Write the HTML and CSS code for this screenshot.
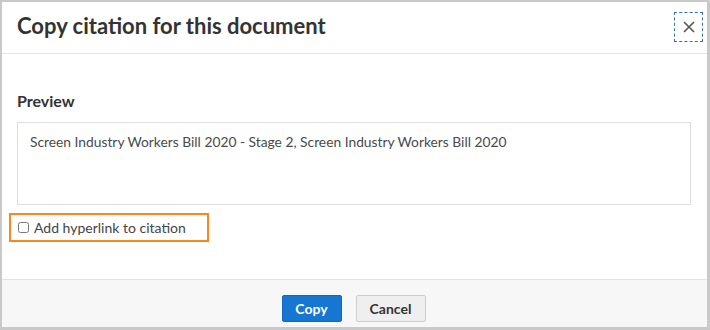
FILE: index.html
```html
<!DOCTYPE html>
<html lang="en">
<head>
  <meta charset="UTF-8">
  <meta name="viewport" content="width=device-width, initial-scale=1.0">
  <title>Copy citation</title>
  <link rel="stylesheet" href="styles.css">
</head>
<body>
  <div class="dialog">
    <div class="dialog-header">
      <h2>Copy citation for this document</h2>
      <button class="close-btn" aria-label="Close">
        <svg width="12" height="12" viewBox="0 0 12 12"><path d="M1 1L11 11M11 1L1 11" stroke="#555" stroke-width="1.6"/></svg>
      </button>
    </div>

    <div class="dialog-body">
      <h3>Preview</h3>
      <div class="preview">Screen Industry Workers Bill 2020 - Stage 2, Screen Industry Workers Bill 2020</div>
      <label class="hyperlink-option">
        <input type="checkbox">
        <span>Add hyperlink to citation</span>
      </label>
    </div>

    <div class="dialog-footer">
      <button class="btn btn-primary">Copy</button>
      <button class="btn">Cancel</button>
    </div>
  </div>
</body>
</html>
```

FILE: styles.css
```css
/* Reset styles */
* {
  margin: 0;
  padding: 0;
  box-sizing: border-box;
}

body {
  font-family: 'Lato', sans-serif;
  background-color: #c9c9c9;
  color: #333;
  width: 710px;
  height: 330px;
  padding: 2px 3px 3px 2px;
}

.dialog {
  background-color: #fff;
  height: 325px;
  display: flex;
  flex-direction: column;
}

.dialog-header {
  height: 52px;
  border-bottom: 1px solid #e3e3e3;
  display: flex;
  align-items: center;
  justify-content: space-between;
  padding: 0 4px 0 15px;
}

.dialog-header h2 {
  font-size: 22px;
  font-weight: 700;
  color: #333;
  margin-top: -4px;
}

.close-btn {
  width: 29px;
  height: 30px;
  border: 1px dashed #3b6ea5;
  background: #fff;
  display: flex;
  align-items: center;
  justify-content: center;
  margin-top: -2px;
}

.dialog-body {
  flex: 1;
  padding: 37px 16px 0 7px;
}

.dialog-body h3 {
  font-size: 16px;
  font-weight: 700;
  color: #333;
  margin-left: 8px;
  line-height: 20px;
}

.preview {
  margin: 11px 0 0 8px;
  height: 83px;
  border: 1px solid #ddd;
  padding: 10px 12px;
  font-size: 13.8px;
  color: #4a4a4a;
}

.hyperlink-option {
  margin-top: 8px;
  width: 200px;
  height: 29px;
  border: 2px solid #f5891f;
  display: flex;
  align-items: center;
  gap: 5px;
  padding-left: 7px;
  font-size: 14px;
  color: #444;
}

.hyperlink-option input {
  width: 11px;
  height: 11px;
  margin: 0;
}

.dialog-footer {
  height: 48px;
  background-color: #f7f7f7;
  border-top: 1px solid #e3e3e3;
  display: flex;
  justify-content: center;
  gap: 14px;
  padding: 15px 2px 0 0;
}

.btn {
  width: 70px;
  height: 27px;
  font-family: 'Lato', sans-serif;
  font-size: 14px;
  font-weight: 700;
  color: #333;
  background-color: #efefef;
  border: 1px solid #ccc;
  border-radius: 2px;
}

.btn-primary {
  width: 60px;
  background-color: #1676d2;
  border-color: #1168c0;
  color: #fff;
}
```
